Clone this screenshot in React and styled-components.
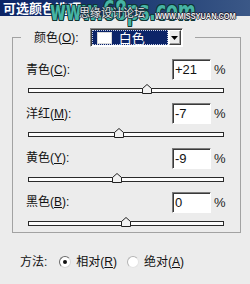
import React from "react";
import styled, { createGlobalStyle } from "styled-components";

const Global = createGlobalStyle`
  html, body { margin: 0; padding: 0; background: #ececec; }
  body { font-family: "Liberation Sans", "Noto Sans CJK SC", sans-serif; }
`;

const Window = styled.div`
  position: relative;
  width: 250px;
  height: 284px;
  overflow: hidden;
  background: #ececec;
  display: flex;
  flex-direction: column;
  font-size: 12px;
  color: #111;
`;

const TitleBar = styled.div`
  flex-shrink: 0;
  height: 16px;
  padding-left: 3px;
  display: flex;
  align-items: center;
  background: linear-gradient(to right, #0b2466 0%, #1f3d74 55%, #3b5887 100%);
`;

const Title = styled.span`
  color: #fff;
  font-weight: bold;
  font-size: 13px;
  line-height: 16px;
  font-family: "Noto Sans CJK SC", sans-serif;
`;

const Watermark = styled.div`
  position: absolute;
  left: 50px;
  top: -5px;
  width: 200px;
  height: 32px;
  pointer-events: none;
`;

const WatermarkBig = styled.span`
  position: absolute;
  left: 0;
  top: 0;
  font-family: "DejaVu Sans", sans-serif;
  font-weight: bold;
  font-size: 26px;
  line-height: 32px;
  color: #46b4a4;
  white-space: nowrap;
  transform: scaleX(0.66);
  transform-origin: left center;
  text-shadow: 1px 0 0 #0e3434, -1px 0 0 #0e3434, 0 1px 0 #0e3434, 0 -1px 0 #0e3434,
    1px 1px 0 #0e3434, -1px -1px 0 #0e3434, 1px -1px 0 #0e3434, -1px 1px 0 #0e3434;
`;

const WatermarkCn = styled.span`
  position: absolute;
  left: 29px;
  top: 11px;
  font-family: "Noto Sans CJK SC", sans-serif;
  font-size: 11px;
  line-height: 13px;
  color: #e8e8e8;
  white-space: nowrap;
  text-shadow: 1px 0 0 #1a2a3a, -1px 0 0 #1a2a3a, 0 1px 0 #1a2a3a, 0 -1px 0 #1a2a3a;
`;

const WatermarkUrl = styled.span`
  position: absolute;
  left: 105px;
  top: 16px;
  font-family: "Liberation Sans", sans-serif;
  font-weight: bold;
  font-size: 9px;
  line-height: 11px;
  color: #f0f0f0;
  white-space: nowrap;
  transform: scaleX(0.82);
  transform-origin: left center;
  text-shadow: 1px 0 0 #223, -1px 0 0 #223, 0 1px 0 #223, 0 -1px 0 #223;
`;

const GroupBox = styled.fieldset`
  box-sizing: border-box;
  width: 229px;
  min-inline-size: 0;
  margin: 12px 0 0 12px;
  padding: 12px 14px 5px 13px;
  border: 1px solid #a2a2a2;
  display: flex;
  flex-direction: column;
  gap: 9.33px;
`;

const Legend = styled.legend`
  display: flex;
  align-items: center;
  gap: 11px;
  height: 19px;
  margin-left: -5px;
  padding: 0 12px 0 13px;
`;

const Label = styled.span`
  font-size: 12px;
  line-height: 14px;
  color: #111;
  white-space: nowrap;
  flex: ${(p) => (p.$grow ? 1 : "none")};
`;

const Select = styled.div`
  box-sizing: border-box;
  width: 93px;
  height: 19px;
  display: flex;
  border: 1px solid;
  border-color: #8a8a8a #ffffff #ffffff #8a8a8a;
  box-shadow: inset 1px 1px 0 #3c3c3c;
  padding: 1px 1px 1px 1px;
  background: #fff;
`;

const SelectValue = styled.div`
  flex: 1;
  display: flex;
  align-items: center;
  gap: 7px;
  padding-left: 5px;
  margin: 0 1px 0 0;
  background: #0c2468;
  outline: 1px dotted #c8d0e8;
  outline-offset: -1px;
`;

const Swatch = styled.span`
  width: 15px;
  height: 12px;
  box-sizing: border-box;
  background: #ffffff;
  border: 1px solid #d8d8d8;
`;

const SelectText = styled.span`
  color: #fff;
  font-family: "Noto Sans CJK SC", sans-serif;
  font-size: 13px;
  line-height: 15px;
`;

const ArrowButton = styled.div`
  box-sizing: border-box;
  width: 12px;
  display: flex;
  align-items: center;
  justify-content: center;
  background: #ececec;
  border: 1px solid;
  border-color: #ffffff #404040 #404040 #ffffff;
  box-shadow: inset -1px -1px 0 #9a9a9a;
`;

const Row = styled.div`
  display: flex;
  flex-direction: column;
`;

const TopLine = styled.div`
  display: flex;
  align-items: center;
  height: 21px;
`;

const Field = styled.input`
  box-sizing: border-box;
  width: 39px;
  height: 21px;
  margin: 0 3px 0 0;
  padding: 0 0 0 2px;
  border: 1px solid;
  border-color: #7c7c7c #ffffff #ffffff #7c7c7c;
  box-shadow: inset 1px 1px 0 #3a3a3a;
  background: #fff;
  font-family: "Liberation Sans", sans-serif;
  font-size: 13px;
  color: #111;
  outline: none;
`;

const Percent = styled.span`
  width: 12px;
  font-family: "Liberation Sans", sans-serif;
  font-size: 13px;
  color: #222;
`;

const SliderBox = styled.div`
  position: relative;
  width: 196px;
  height: 10px;
  margin: 4px 0 0 2px;
`;

const Track = styled.div`
  box-sizing: border-box;
  margin-top: 4px;
  height: 5px;
  border: 1px solid #2a2a2a;
  background: #fdfdfd;
`;

const Thumb = styled.svg`
  position: absolute;
  top: 0;
  width: 10px;
  height: 10px;
`;

const MethodRow = styled.div`
  display: flex;
  align-items: center;
  height: 16px;
  margin-top: 21px;
  padding-left: 20px;
  gap: 12px;
`;

const RadioOption = styled.label`
  display: flex;
  align-items: center;
  gap: 5px;
  margin-right: -2px;
`;

const RadioCircle = styled.span`
  box-sizing: border-box;
  width: 12px;
  height: 12px;
  border-radius: 50%;
  background: #fff;
  border: 1px solid;
  border-color: ${(p) => (p.$on ? "#6a6a6a #d8d8d8 #d8d8d8 #6a6a6a" : "#b4b4b4 #e4e4e4 #e4e4e4 #b4b4b4")};
  display: flex;
  align-items: center;
  justify-content: center;
  &::after {
    content: "";
    width: 4px;
    height: 4px;
    border-radius: 50%;
    background: ${(p) => (p.$on ? "#111" : "transparent")};
  }
`;

const rows = [
  { name: "青色", key: "C", value: "+21", num: 21 },
  { name: "洋红", key: "M", value: "-7", num: -7 },
  { name: "黄色", key: "Y", value: "-9", num: -9 },
  { name: "黑色", key: "B", value: "0", num: 0 },
];

function Slider({ num }) {
  const center = 98 + num * 0.98;
  return (
    <SliderBox>
      <Track />
      <Thumb style={{ left: `${center - 5}px` }} viewBox="0 0 10 10">
        <path d="M0.5 9.5 V4.5 L5 0.5 L9.5 4.5 V9.5 Z" fill="#f2f2f2" stroke="#222" strokeWidth="1" />
      </Thumb>
    </SliderBox>
  );
}

export default function App() {
  return (
    <>
      <Global />
      <Window>
        <TitleBar>
          <Title>可选颜色选项</Title>
        </TitleBar>
        <Watermark>
          <WatermarkBig>www.68ps.com</WatermarkBig>
          <WatermarkCn>思缘设计论坛</WatermarkCn>
          <WatermarkUrl>WWW.MISSYUAN.COM</WatermarkUrl>
        </Watermark>
        <GroupBox>
          <Legend>
            <Label>
              颜色(<u>O</u>):
            </Label>
            <Select>
              <SelectValue>
                <Swatch />
                <SelectText>白色</SelectText>
              </SelectValue>
              <ArrowButton>
                <svg width="7" height="4" viewBox="0 0 7 4">
                  <path d="M0 0 H7 L3.5 4 Z" fill="#000" />
                </svg>
              </ArrowButton>
            </Select>
          </Legend>
          {rows.map((r) => (
            <Row key={r.key}>
              <TopLine>
                <Label $grow>
                  {r.name}(<u>{r.key}</u>):
                </Label>
                <Field readOnly value={r.value} />
                <Percent>%</Percent>
              </TopLine>
              <Slider num={r.num} />
            </Row>
          ))}
        </GroupBox>
        <MethodRow>
          <Label>方法:</Label>
          <RadioOption>
            <RadioCircle $on />
            <Label>
              相对(<u>R</u>)
            </Label>
          </RadioOption>
          <RadioOption>
            <RadioCircle />
            <Label>
              绝对(<u>A</u>)
            </Label>
          </RadioOption>
        </MethodRow>
      </Window>
    </>
  );
}
